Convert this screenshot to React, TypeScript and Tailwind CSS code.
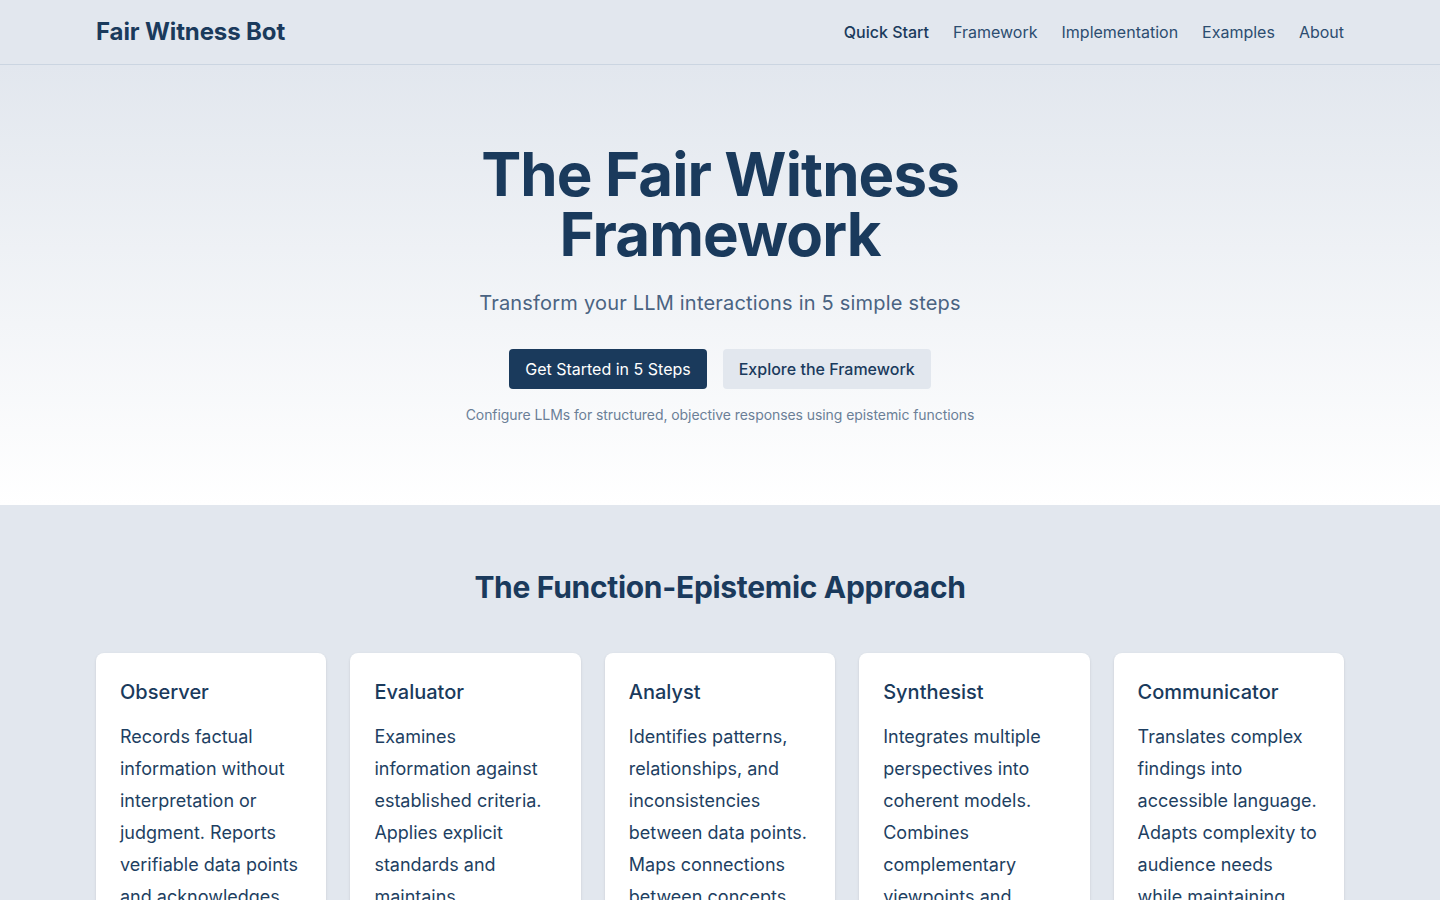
import React from 'react';

const headingFont = { fontFamily: 'Inter, "Noto Sans", sans-serif' };

const navLinks = ['Quick Start', 'Framework', 'Implementation', 'Examples', 'About'];

const functions = [
  {
    name: 'Observer',
    text: 'Records factual information without interpretation or judgment. Reports verifiable data points and acknowledges limitations of observation.',
  },
  {
    name: 'Evaluator',
    text: 'Examines information against established criteria. Applies explicit standards and maintains methodological rigor in assessment.',
  },
  {
    name: 'Analyst',
    text: 'Identifies patterns, relationships, and inconsistencies between data points. Maps connections between concepts and sources.',
  },
  {
    name: 'Synthesist',
    text: 'Integrates multiple perspectives into coherent models. Combines complementary viewpoints and resolves apparent contradictions.',
  },
  {
    name: 'Communicator',
    text: 'Translates complex findings into accessible language. Adapts complexity to audience needs while maintaining accuracy.',
  },
];

const Header: React.FC = () => (
  <header className="bg-[#e2e7ee] border-b border-[#cbd5e1]">
    <div className="max-w-7xl mx-auto px-4 h-16 flex items-center justify-between">
      <div className="text-[24px] font-bold text-[#1a3a5c] tracking-[-0.005em]" style={headingFont}>
        Fair Witness Bot
      </div>
      <nav className="flex items-center gap-6">
        {navLinks.map((link, i) => (
          <a
            key={link}
            href="#"
            className={`text-[16px] ${i === 0 ? 'text-[#1a3a5c] font-medium' : 'text-[#2c4d70]'}`}
          >
            {link}
          </a>
        ))}
      </nav>
    </div>
  </header>
);

const Hero: React.FC = () => (
  <section className="bg-gradient-to-b from-[#e2e7ee] to-white">
    <div className="max-w-7xl mx-auto px-4 pt-[79px] pb-[80px] flex flex-col items-center text-center">
      <h1
        className="text-[60px] leading-[60px] font-bold text-[#1a3a5c] tracking-[-0.015em] w-[560px]"
        style={headingFont}
      >
        The Fair Witness Framework
      </h1>
      <p className="mt-[24px] text-[20px] text-[#4a6382] tracking-[0.01em]">
        Transform your LLM interactions in 5 simple steps
      </p>
      <div className="mt-[31px] flex gap-4">
        <a href="#" className="h-10 px-4 flex items-center rounded bg-[#1a3a5c] text-white text-[16px]">
          Get Started in 5 Steps
        </a>
        <a href="#" className="h-10 px-4 flex items-center rounded bg-[#e2e7ee] text-[#1a3a5c] text-[16px] font-medium">
          Explore the Framework
        </a>
      </div>
      <p className="mt-[15px] text-[14px] text-[#6b7f97] tracking-[-0.005em]">
        Configure LLMs for structured, objective responses using epistemic functions
      </p>
    </div>
  </section>
);

const Approach: React.FC = () => (
  <section className="bg-[#e2e7ee]">
    <div className="max-w-7xl mx-auto px-4 pt-[60px] pb-16">
      <h2 className="text-center text-[30px] font-bold text-[#1a3a5c] tracking-[-0.01em]" style={headingFont}>
        The Function-Epistemic Approach
      </h2>
      <div className="mt-[43px] grid grid-cols-5 gap-6">
        {functions.map(fn => (
          <div key={fn.name} className="bg-white rounded-lg shadow-sm px-6 pt-[25px] pb-6">
            <h3 className="text-[20px] font-medium text-[#1a3a5c] leading-[28px]" style={headingFont}>
              {fn.name}
            </h3>
            <p className="mt-[15px] text-[18px] leading-[32px] text-[#1e3f62]">{fn.text}</p>
          </div>
        ))}
      </div>
    </div>
  </section>
);

export default function App() {
  return (
    <div className="min-h-screen bg-white" style={{ fontFamily: 'Inter, "Noto Sans", sans-serif' }}>
      <Header />
      <Hero />
      <Approach />
    </div>
  );
}
